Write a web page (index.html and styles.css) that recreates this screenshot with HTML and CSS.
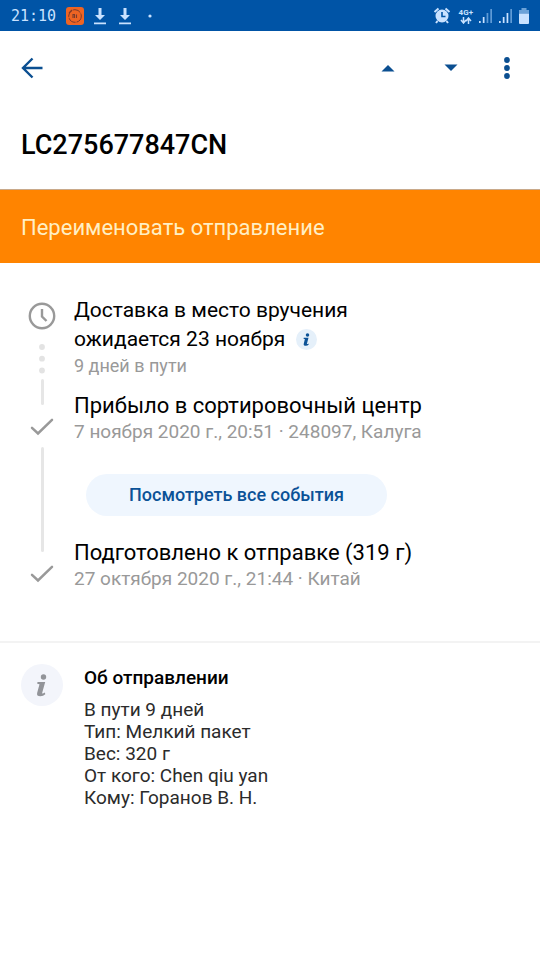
FILE: index.html
```html
<!DOCTYPE html>
<html lang="ru">
<head>
<meta charset="utf-8">
<meta name="viewport" content="width=device-width, initial-scale=1">
<title>LC275677847CN</title>
<link rel="stylesheet" href="styles.css">
</head>
<body>
<div class="status">
  <div class="status-group">
    <time class="clock">21:10</time>
    <svg class="app" width="20" height="20" viewBox="0 0 20 20" aria-hidden="true"><rect x="1" y="1" width="18" height="18" rx="3" fill="#ee6423"/><circle cx="10" cy="10" r="6.3" fill="none" stroke="#7c3b2b" stroke-width="1" stroke-dasharray="8 1"/><path d="M4 7l3-3M8 12V8.500h1.500V12M11.500 12V8.500" fill="none" stroke="#7c3b2b" stroke-width="1.100"/></svg>
    <svg class="download" width="14" height="18" viewBox="0 0 14 18" aria-hidden="true"><path d="M5.500 1h3v7H12l-5 5-5-5h3.500zM1 15.500h12v1.700H1z" fill="#c9e2ff"/></svg>
    <svg class="download" width="14" height="18" viewBox="0 0 14 18" aria-hidden="true"><path d="M5.500 1h3v7H12l-5 5-5-5h3.500zM1 15.500h12v1.700H1z" fill="#c9e2ff"/></svg>
    <svg width="4" height="4" viewBox="0 0 4 4" aria-hidden="true"><circle cx="2" cy="2" r="1.600" fill="#c9e2ff"/></svg>
  </div>
  <div class="status-group status-right">
    <svg class="alarm" width="18" height="18" viewBox="0 0 18 18" aria-hidden="true"><path d="M1.500 5l4-3.500M16.500 5l-4-3.500M4.500 14l-1.500 2M13.500 14l1.500 2" stroke="#c9e2ff" stroke-width="2"/><circle cx="9" cy="9" r="6.500" fill="#c9e2ff"/><path d="M9 5v4.500h3.500" fill="none" stroke="#0054a6" stroke-width="1.600"/></svg>
    <div class="network">
      <span>4G+</span>
      <svg width="12" height="7" viewBox="0 0 12 7" aria-hidden="true"><path d="M3.500 0v5M1 3l2.500 3L6 3M8.500 7V2M6 4l2.500-3L11 4" fill="none" stroke="#c9e2ff" stroke-width="1.500"/></svg>
    </div>
    <svg width="15" height="16" viewBox="0 0 15 16" aria-hidden="true"><path d="M1 13h1.700v2H1zM4.800 9h1.700v6H4.800z" fill="#c9e2ff"/><path d="M8.600 5h1.700v10H8.600zM12.300 1H14v14h-1.700z" fill="#5f9bd6"/></svg>
    <svg width="15" height="16" viewBox="0 0 15 16" aria-hidden="true"><path d="M1 13h1.700v2H1zM4.800 9h1.700v6H4.800zM8.600 5h1.700v10H8.600z" fill="#c9e2ff"/><path d="M12.300 1H14v14h-1.700z" fill="#5f9bd6"/></svg>
    <svg width="12" height="18" viewBox="0 0 12 18" aria-hidden="true"><path d="M3.500 1h5v2H11v3.500H1V3h2.500z" fill="#6ba2d8"/><path d="M1 6.500h10V16q0 1-1 1H2q-1 0-1-1z" fill="#c9e2ff"/></svg>
  </div>
</div>

<header class="header">
  <nav class="toolbar">
    <button class="icon-button" aria-label="Назад"><svg width="22" height="22" viewBox="0 0 22 22"><path d="M21.500 11H2M11.500 1.500L2 11l9.500 9.500" fill="none" stroke="#0b4f91" stroke-width="2.400"/></svg></button>
    <div class="actions">
      <button class="icon-button" aria-label="Предыдущее"><svg width="14" height="8" viewBox="0 0 14 8"><path d="M.5 7.500L7 1l6.500 6.500z" fill="#0b4f91"/></svg></button>
      <button class="icon-button" aria-label="Следующее"><svg width="14" height="8" viewBox="0 0 14 8"><path d="M.5.500L7 7 13.500.500z" fill="#0b4f91"/></svg></button>
      <button class="icon-button" aria-label="Меню"><svg width="6" height="22" viewBox="0 0 6 22"><g fill="#0b4f91"><circle cx="3" cy="3" r="2.900"/><circle cx="3" cy="11" r="2.900"/><circle cx="3" cy="19" r="2.900"/></g></svg></button>
    </div>
  </nav>
  <h1 class="title">LC275677847CN</h1>
</header>

<button class="rename">Переименовать отправление</button>

<main>
  <ol class="timeline">
    <li class="event expected">
      <div class="rail">
        <svg width="28" height="28" viewBox="0 0 28 28" aria-hidden="true"><circle cx="14" cy="14" r="12.200" fill="none" stroke="#999" stroke-width="2.400"/><path d="M14 7v7.500l4.500 4.500" fill="none" stroke="#999" stroke-width="2.400"/></svg>
        <svg class="dots" width="6" height="30" viewBox="0 0 6 30" aria-hidden="true"><g fill="#e3e3e3"><circle cx="3" cy="3" r="2.900"/><circle cx="3" cy="14.700" r="2.900"/><circle cx="3" cy="26.500" r="2.900"/></g></svg>
        <div class="line"></div>
      </div>
      <div class="details">
        <h2 class="event-title">Доставка в место вручения<br>ожидается 23 ноября <button class="hint" aria-label="Подробнее"><svg width="21" height="21" viewBox="0 0 42 42"><circle cx="21" cy="21" r="21" fill="#e5f0fa"/><circle cx="23" cy="12" r="3.500" fill="#0b5297"/><path d="M15.500 17.500h9.500l-3.300 12.500q1.700.2 3-1.200l.8 2.200q-2.300 2.700-6 2.700-5 0-4-4.300l2.300-9.200-2.600-.4z" fill="#0b5297"/></svg></button></h2>
        <p class="event-meta">9 дней в пути</p>
      </div>
    </li>
    <li class="event done">
      <div class="rail">
        <svg width="24" height="18" viewBox="0 0 24 18" aria-hidden="true"><path d="M2 9.800l6 5.700L22 1.800" fill="none" stroke="#999" stroke-width="2.500" stroke-linecap="round"/></svg>
        <div class="line"></div>
      </div>
      <div class="details">
        <h2 class="event-title">Прибыло в сортировочный центр</h2>
        <p class="event-meta">7 ноября 2020 г., 20:51 · 248097, Калуга</p>
        <button class="all-events">Посмотреть все события</button>
      </div>
    </li>
    <li class="event done">
      <div class="rail">
        <svg width="24" height="18" viewBox="0 0 24 18" aria-hidden="true"><path d="M2 9.800l6 5.700L22 1.800" fill="none" stroke="#999" stroke-width="2.500" stroke-linecap="round"/></svg>
      </div>
      <div class="details">
        <h2 class="event-title">Подготовлено к отправке (319 г)</h2>
        <p class="event-meta">27 октября 2020 г., 21:44 · Китай</p>
      </div>
    </li>
  </ol>

  <section class="about">
    <svg class="about-icon" width="42" height="42" viewBox="0 0 42 42" aria-hidden="true"><circle cx="21" cy="21" r="21" fill="#f3f5fb"/><circle cx="22.500" cy="13" r="2.700" fill="#929499"/><path d="M16.500 18h7.700l-3.200 11.500q1.600 0 2.900-1l.4 1.800q-2 2-4.900 2-4.200 0-3.200-3.600l2.300-8.500-2.300-.4z" fill="#929499"/></svg>
    <div>
      <h2 class="about-title">Об отправлении</h2>
      <ul class="facts">
        <li>В пути 9 дней</li>
        <li>Тип: Мелкий пакет</li>
        <li>Вес: 320 г</li>
        <li>От кого: Chen qiu yan</li>
        <li>Кому: Горанов В. Н.</li>
      </ul>
    </div>
  </section>
</main>
</body>
</html>
```
FILE: styles.css
```css
* {
  box-sizing: border-box;
  margin: 0;
  padding: 0;
}

body {
  background: #fff;
  color: #000;
  font-family: Roboto, "Liberation Sans", sans-serif;
}

button {
  border: 0;
  background: none;
  font: inherit;
  cursor: pointer;
}

svg {
  display: block;
}

ol,
ul {
  list-style: none;
}

/* Status bar */
.status {
  display: flex;
  justify-content: space-between;
  align-items: center;
  height: 31px;
  padding: 0 10px 0 11px;
  background: #0054a6;
  color: #c9e2ff;
}

.status-group {
  display: flex;
  align-items: center;
}

.status-right {
  gap: 5px;
}

.clock {
  font: 15px/20px "DejaVu Sans Mono", monospace;
}

.app {
  margin-left: 9px;
}

.download {
  margin: 0 0 0 8px;
}

.download + .download {
  margin: 0 16px 0 11px;
}

.alarm {
  margin-right: 3px;
}

.network {
  display: flex;
  flex-direction: column;
  align-items: center;
  font-size: 8px;
  font-weight: 700;
  line-height: 9px;
}

/* Header */
.header {
  padding: 11px 16px 28px 7px;
  border-bottom: 1px solid #c9a98a;
}

.toolbar,
.actions {
  display: flex;
  align-items: center;
  justify-content: space-between;
}

.actions {
  gap: 14px;
}

.icon-button {
  display: grid;
  place-items: center;
  width: 49px;
  height: 52px;
}

.actions .icon-button:last-child {
  width: 35px;
}

.title {
  margin: 35px 14px 0;
  font-size: 27px;
  font-weight: 500;
  line-height: 32px;
}

.rename {
  display: block;
  width: 100%;
  padding: 25px 21px 22px;
  background: #ff8400;
  color: #ffefc4;
  font-size: 22px;
  line-height: 26px;
  text-align: left;
}

/* Timeline */
.timeline {
  padding: 33px 21px 50px;
  border-bottom: 2px solid #f3f3f3;
}

.event {
  display: flex;
  gap: 11px;
}

.rail {
  display: flex;
  flex: none;
  flex-direction: column;
  align-items: center;
  width: 42px;
}

.dots {
  margin: 14px 0 5px;
}

.line {
  flex: 1;
  width: 3px;
  margin-bottom: -14px;
  border-radius: 2px;
  background: #e6e6e6;
}

.event-title {
  font-size: 22px;
  font-weight: 400;
  line-height: 29px;
}

.event-meta {
  color: #999;
  font-size: 19px;
  line-height: 24px;
}

.expected .rail {
  padding-top: 6px;
}

.expected .details {
  padding-bottom: 13px;
}

.expected .event-title {
  font-size: 21px;
}

.expected .event-meta {
  font-size: 18px;
}

.done .rail {
  padding-top: 27px;
}

.done .line {
  margin-top: 11px;
}

.hint {
  margin-left: 5px;
  vertical-align: middle;
}

.hint svg {
  margin-bottom: 2px;
}

.all-events {
  display: block;
  margin: 30px 0 22px 12px;
  padding: 10px 43px;
  border-radius: 21px;
  background: #eff6fe;
  color: #0b5297;
  font-size: 18px;
  font-weight: 500;
  line-height: 22px;
}

/* Shipment summary */
.about {
  display: flex;
  gap: 21px;
  padding: 21px;
}

.about-icon {
  flex: none;
}

.about-title {
  margin-top: 3px;
  font-size: 19px;
  font-weight: 500;
  line-height: 22px;
}

.facts {
  margin-top: 10px;
  color: #2b2b2b;
  font-size: 19px;
  line-height: 22px;
}
```
